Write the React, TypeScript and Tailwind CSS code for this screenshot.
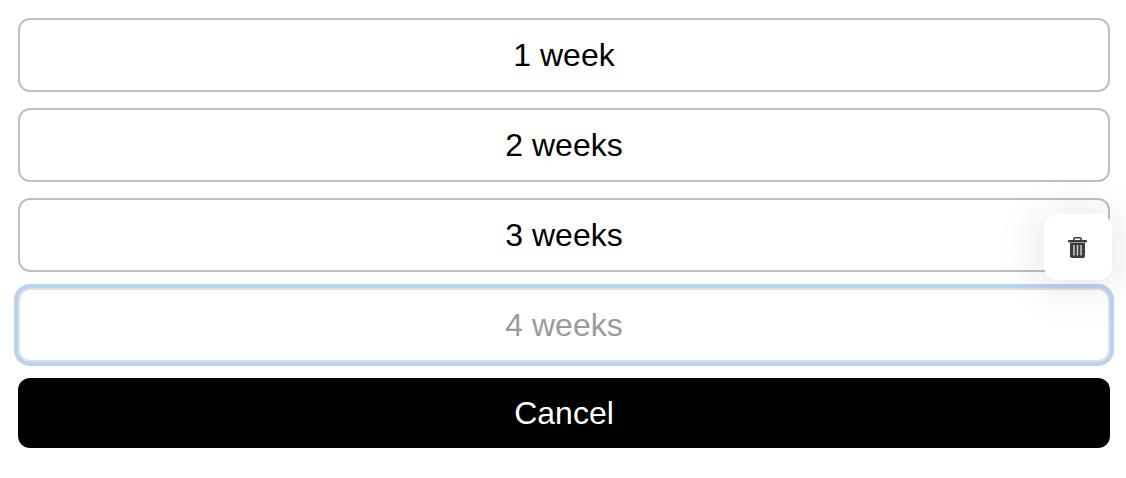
import React from 'react';

const weeks = ['1 week', '2 weeks', '3 weeks'];

const TrashIcon = () => (
  <svg width="19" height="21" viewBox="0 0 19 21" fill="none">
    <path d="M5.800 3.500V2.200C5.800 1.200 6.500.8 7.300.8h4.400c.8 0 1.500.4 1.500 1.400v1.300" stroke="#3c3c3c" strokeWidth="1.600" />
    <rect x="0" y="3" width="19" height="2.600" rx="1" fill="#3c3c3c" />
    <path d="M2 6h15v13c0 1.200-.8 2-2 2H4c-1.200 0-2-.8-2-2V6z" fill="#3c3c3c" />
    <rect x="5.200" y="8" width="1.500" height="10.500" fill="#cfcfcf" />
    <rect x="8.750" y="8" width="1.500" height="10.500" fill="#cfcfcf" />
    <rect x="12.300" y="8" width="1.500" height="10.500" fill="#cfcfcf" />
  </svg>
);

export default function App() {
  return (
    <div className="w-[1126px] h-[478px] overflow-hidden bg-white px-[18px] pt-[18px] pr-[16px] font-['Liberation_Sans',Arial,sans-serif]">
      <div className="flex flex-col gap-4">
        {weeks.map((label, i) => (
          <div key={label} className="relative">
            <button className="w-full h-[74px] rounded-[12px] border-2 border-[#bfbfbf] bg-white text-[32px] text-black">
              {label}
            </button>
            {i === 2 && (
              <button className="absolute right-[-2px] top-4 w-[68px] h-[66px] pr-[2px] rounded-[14px] bg-white flex items-center justify-center shadow-[0_4px_50px_rgba(0,0,0,0.14)]">
                <TrashIcon />
              </button>
            )}
          </div>
        ))}
        <input
          readOnly
          placeholder="4 weeks"
          className="w-full h-[74px] rounded-[12px] border-2 border-[#e0e0e0] bg-white text-center text-[32px] text-black placeholder:text-[#9b9b9b] outline-none shadow-[0_0_0_4px_#b9d4f1]"
        />
        <button className="w-full h-[70px] rounded-[12px] bg-black text-[32px] text-white">Cancel</button>
      </div>
    </div>
  );
}
